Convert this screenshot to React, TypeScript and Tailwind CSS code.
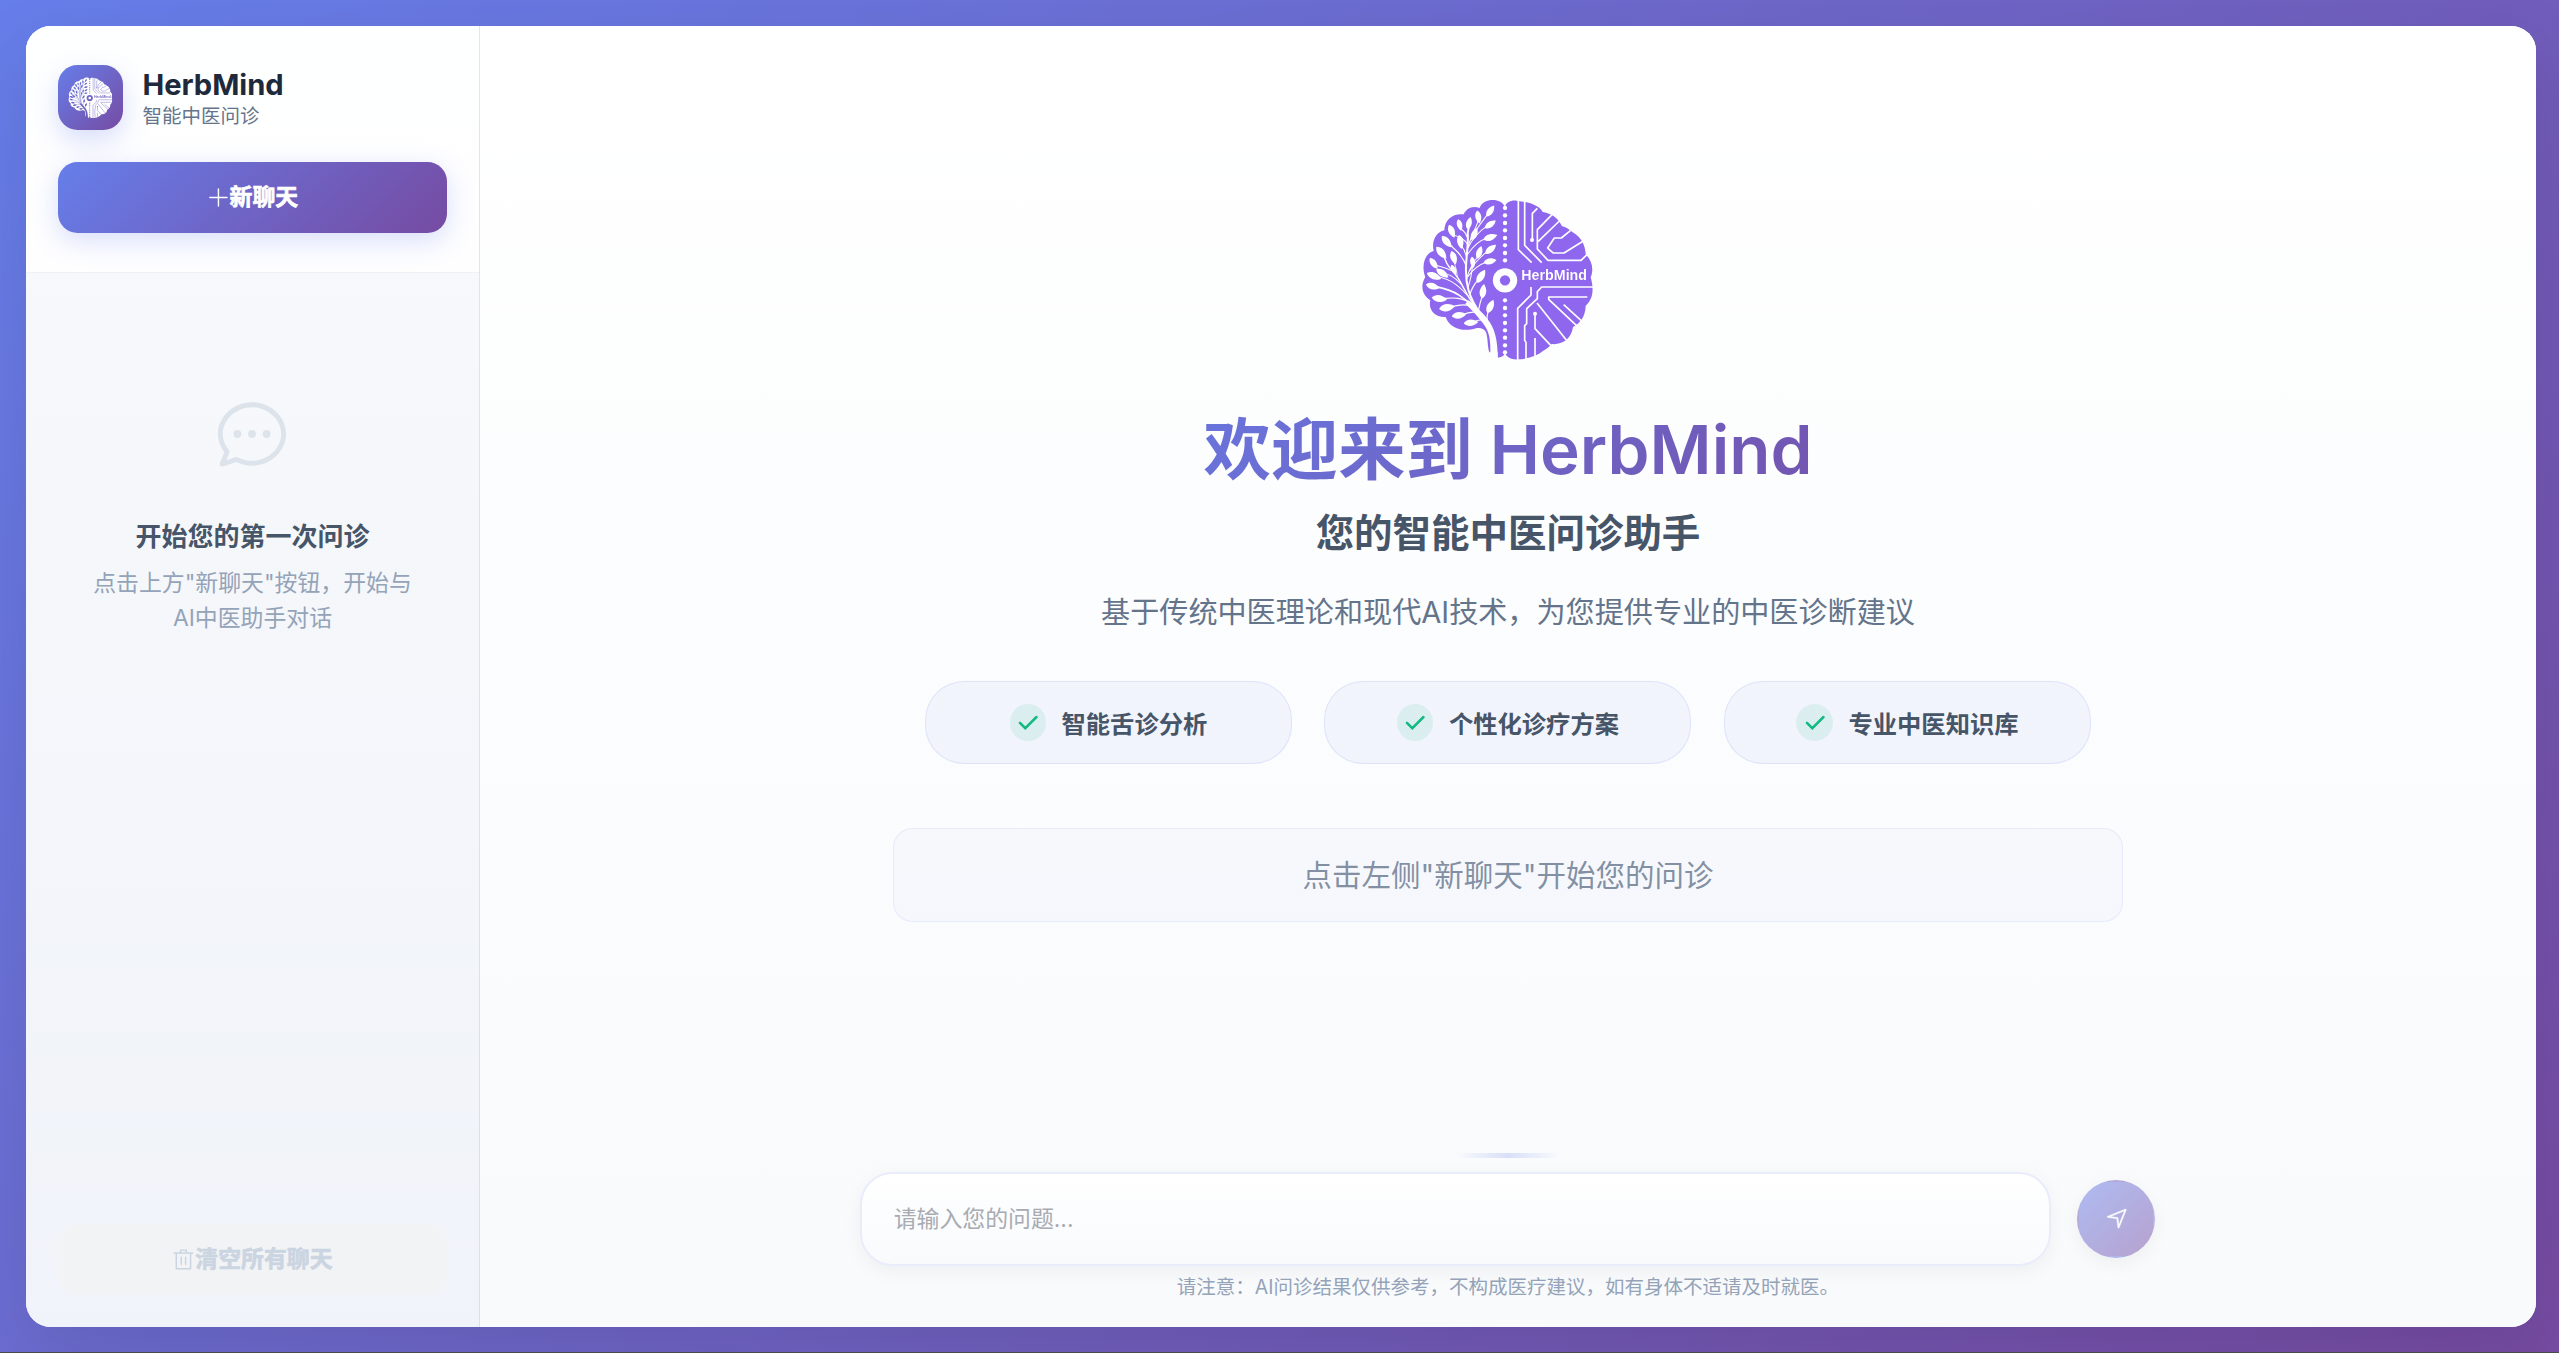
import React from "react";

const FONT = "font-[Inter,'Noto_Sans_CJK_SC',sans-serif]";

function ElIcon({ paths, className }: { paths: string[]; className: string }) {
  return (
    <svg viewBox="0 0 1024 1024" fill="currentColor" className={className}>
      {paths.map((d) => (
        <path key={d} d={d} />
      ))}
    </svg>
  );
}

const PLUS = [
  "M480 480V128a32 32 0 0 1 64 0v352h352a32 32 0 1 1 0 64H544v352a32 32 0 1 1-64 0V544H128a32 32 0 0 1 0-64z",
];
const CHAT = [
  "m174.72 855.68 135.296-45.12 23.68 11.84C388.096 849.536 448.576 864 512 864c211.84 0 384-166.784 384-352S723.84 160 512 160 128 326.784 128 512c0 69.12 24.96 139.264 70.848 199.232l22.08 28.8-46.272 115.584zm-45.248 82.56A32 32 0 0 1 89.6 896l58.368-145.92C94.72 680.32 64 596.864 64 512 64 299.904 256 96 512 96s448 203.904 448 416-192 416-448 416a461.056 461.056 0 0 1-206.912-48.384l-175.616 58.56z",
  "M512 563.2a51.2 51.2 0 1 1 0-102.4 51.2 51.2 0 0 1 0 102.4m192 0a51.2 51.2 0 1 1 0-102.4 51.2 51.2 0 0 1 0 102.4m-384 0a51.2 51.2 0 1 1 0-102.4 51.2 51.2 0 0 1 0 102.4",
];
const TRASH = [
  "M160 256H96a32 32 0 0 1 0-64h256V95.936a32 32 0 0 1 32-32h256a32 32 0 0 1 32 32V192h256a32 32 0 1 1 0 64h-64v672a32 32 0 0 1-32 32H192a32 32 0 0 1-32-32zm448-64v-64H416v64zM224 896h576V256H224zm192-128a32 32 0 0 1-32-32V416a32 32 0 0 1 64 0v320a32 32 0 0 1-32 32m192 0a32 32 0 0 1-32-32V416a32 32 0 0 1 64 0v320a32 32 0 0 1-32 32",
];
const CHECK = [
  "M406.656 706.944 195.84 496.256a32 32 0 1 0-45.248 45.248l256 256 512-512a32 32 0 0 0-45.248-45.248L406.592 706.944z",
];
const POSITION = [
  "m249.6 417.088 319.744 43.072 39.168 310.272L845.12 178.88zm-129.024 47.168a32 32 0 0 1-7.68-61.44l777.792-311.04a32 32 0 0 1 41.6 41.6l-310.72 775.68a32 32 0 0 1-61.44-7.808L512 516.992l-391.424-52.736z",
];

// Leaves of the herb half: centre x, centre y, rotation, length.
const LEAVES: [number, number, number, number][] = [
  [271, 94, -55, 38], [235, 112, 80, 38], [207, 130, -75, 36], [179, 136, 75, 34],
  [155, 155, 68, 40], [271, 134, -35, 38], [223, 163, -65, 38], [181, 187, 80, 40],
  [140, 186, 50, 42], [271, 173, -18, 42], [124, 219, 50, 44], [238, 218, -72, 38],
  [272, 209, -40, 40], [161, 234, 72, 40], [218, 248, 82, 32], [270, 245, -12, 38],
  [101, 251, 55, 38], [161, 270, 62, 30], [127, 281, 35, 42], [102, 289, 22, 44],
  [243, 290, -58, 44], [98, 320, 15, 40], [118, 357, 8, 44], [249, 335, -82, 42],
  [141, 384, -10, 46], [271, 380, -65, 42], [177, 407, -8, 42], [213, 429, -5, 42],
];

const STEMS: [string, number][] = [
  ["M262 430 C235 390 205 365 175 345 C150 330 130 326 112 322", 5],
  ["M262 430 C222 385 198 340 180 305 C168 282 150 270 140 250 C136 240 132 232 130 226", 4.5],
  ["M240 400 C205 350 196 310 198 260 C200 215 206 190 203 160 L207 140", 6],
  ["M200 265 C192 235 178 220 160 205 L148 192", 3.5],
  ["M200 235 C196 215 190 205 184 198", 3],
  ["M203 195 C190 172 168 168 158 166", 3],
  ["M203 175 C196 155 186 150 181 146", 3],
  ["M205 200 C215 160 232 140 235 120 M208 188 C225 150 255 115 266 100", 3],
  ["M204 205 C220 170 245 150 262 138 M202 225 C225 190 245 180 262 175", 3],
  ["M200 300 C205 265 225 245 236 225 M208 275 C225 245 250 225 264 213 M204 290 C225 260 250 250 262 246", 3],
  ["M205 320 C212 300 216 275 218 255", 3],
  ["M210 345 C215 320 230 305 240 293 M236 390 C240 365 246 355 249 340", 3.5],
  ["M262 425 C258 405 266 392 270 385", 3.5],
  ["M200 345 C165 305 140 298 116 291 M182 312 C160 288 145 284 130 281 M152 272 C135 262 120 262 104 255", 3],
  ["M172 292 C170 265 162 250 161 240", 2.5],
  ["M215 372 C180 348 150 356 122 357 M228 388 C195 365 165 380 145 384", 3.5],
  ["M245 405 C225 390 205 400 182 406 M255 425 C245 415 230 424 215 428", 3.5],
];

const DOTS = [85, 107, 130, 152, 175, 197, 220, 242, 362, 385, 407, 430, 452, 474, 497, 518];

const TRACES = [
  "M355 60 V210 L395 249",
  "M374 60 V197 L425 249",
  "M412 86 L397 101 V180",
  "M459 102 L412 150 V208 L444 242 H543 L566 220",
  "M478 124 L414 186",
  "M512 152 L484 175 H463 L443 205 L460 220 H492 L556 180",
  "M585 322 H425 L412 336 V357 L380 387 V432 L374 438 V482 L378 488 V545",
  "M393 322 V346 L353 386 V545",
  "M562 352 H446 V359 L532 440",
  "M491 375 L546 425",
  "M411 370 L503 486",
  "M405 402 V447 L455 500",
  "M405 475 V535",
];

function BrainLogo({ id, className }: { id: string; className: string }) {
  return (
    <svg viewBox="60 55 526 490" className={className}>
      <defs>
        <mask id={id} maskUnits="userSpaceOnUse" x="50" y="45" width="546" height="510">
          <rect x="50" y="45" width="546" height="510" fill="#fff" />
          <g fill="none" stroke="#000" strokeLinecap="round">
            {STEMS.map(([d, w]) => (
              <path key={d} d={d} strokeWidth={w} />
            ))}
          </g>
          <path
            fill="#000"
            d="M271 520 C272 480 268 455 250 432 C235 412 215 390 196 372 L206 362 C240 392 262 412 276 440 C288 464 294 495 293 545 L271 545 Z"
          />
          {LEAVES.map(([x, y, r, l]) => (
            <path
              key={`${x}-${y}`}
              fill="#000"
              transform={`translate(${x} ${y}) rotate(${r}) scale(${l / 40})`}
              d="M-21 0 C-12 -12 6 -13 21 0 C6 13 -12 12 -21 0 Z"
            />
          ))}
          {DOTS.map((y) => (
            <circle key={y} cx="315" cy={y} r="6.5" fill="#000" />
          ))}
          <circle cx="315" cy="302" r="36.5" fill="#000" />
          <circle cx="315" cy="302" r="15.5" fill="#fff" />
          <g fill="none" stroke="#000" strokeWidth="5" strokeLinejoin="round">
            {TRACES.map((d) => (
              <path key={d} d={d} />
            ))}
          </g>
          <circle cx="396" cy="181" r="6" fill="#000" />
          <circle cx="405" cy="402" r="6" fill="#000" />
          <text
            x="364"
            y="302"
            fontSize="42"
            fontWeight="700"
            fontFamily="Liberation Sans, sans-serif"
            textLength="197"
            lengthAdjust="spacingAndGlyphs"
            fill="#000"
          >
            HerbMind
          </text>
        </mask>
      </defs>
      <path
        mask={`url(#${id})`}
        fill="currentColor"
        d="M315 82 C309 66 290 59 272 61 C255 64 243 72 239 85 C218 76 198 86 191 104 C160 100 134 118 133 152 C108 158 94 184 101 214 C76 220 62 256 76 292 C60 318 66 346 91 362 C84 390 104 414 137 412 C148 446 188 458 228 446 C240 444 252 446 258 458 C264 474 262 500 268 518 L293 518 L293 534 C303 534 311 530 315 521 C322 534 334 540 352 539 C385 538 412 528 430 513 C440 508 448 502 455 493 C484 496 514 480 519 442 C540 430 556 412 557 378 C576 362 584 334 572 293 C582 268 576 244 557 224 C556 198 544 172 518 158 C508 150 498 142 486 140 C476 118 458 102 428 97 C420 80 396 68 350 63 C332 61 318 68 315 82 Z"
      />
    </svg>
  );
}

function Feature({ label }: { label: string }) {
  return (
    <div className="flex h-[63.6px] flex-1 items-center justify-center gap-3 rounded-[30px] border border-[#667eea]/15 bg-[#667eea]/[0.06]">
      <span className="flex size-7 items-center justify-center rounded-full bg-[#10b981]/[0.1] text-[#10b981]">
        <ElIcon paths={CHECK} className="size-[18px] overflow-visible stroke-current stroke-[46]" />
      </span>
      <span className="pt-0.5 text-[18.7px] leading-none font-semibold text-[#475569]">{label}</span>
    </div>
  );
}

export default function App() {
  return (
    <div className="border-b border-[#4a4a4a] bg-[#4a4a4a]">
      <div
        className={`${FONT} h-[1040px] overflow-hidden bg-[linear-gradient(135deg,#667eea_0%,#764ba2_100%)] pt-5 pr-[17.7px] pb-[19.3px] pl-5 [zoom:1.3]`}
      >
        <div className="flex h-full overflow-hidden rounded-[19px] bg-white shadow-[0_20px_60px_rgba(0,0,0,0.1)]">
          <aside className="flex w-[349.2px] shrink-0 flex-col border-r border-black/[0.08] bg-linear-to-b from-[#f8fafc] to-[#f0f3f9]">
            <header className="border-b border-black/5 bg-white/90 px-[24.6px] pt-[30px] pb-[30px]">
              <div className="flex h-[50px] items-center gap-[15px]">
                <div className="flex size-[50px] items-center justify-center rounded-[15px] bg-[linear-gradient(135deg,#667eea,#764ba2)] text-white shadow-[0_8px_20px_rgba(102,126,234,0.25)]">
                  <BrainLogo id="logo-small" className="w-[34.5px]" />
                </div>
                <div className="pt-[2.6px]">
                  <div className="text-[22.4px] leading-[26px] font-bold text-[#1e293b]">HerbMind</div>
                  <div className="text-[15px] leading-[22px] text-[#64748b]">智能中医问诊</div>
                </div>
              </div>
              <button className="mt-[24.4px] flex h-[54.6px] w-full items-center justify-center rounded-[15px] bg-[linear-gradient(135deg,#667eea,#764ba2)] text-[17.6px] font-bold text-white shadow-[0_6px_20px_rgba(102,126,234,0.25)]">
                <ElIcon paths={PLUS} className="size-[1em]" />
                <span className="[-webkit-text-stroke:0.5px]">新聊天</span>
              </button>
            </header>
            <div className="flex flex-1 flex-col items-center pt-[94.2px] text-center">
              <ElIcon paths={CHAT} className="size-[60px] text-[#cbd5e1]/60" />
              <h3 className="mt-[34px] text-[20px] leading-[30px] font-semibold text-[#475569]">
                开始您的第一次问诊
              </h3>
              <p className="mt-[7.6px] text-[17.6px] leading-[26.4px] text-[#94a3b8]">
                点击上方"新聊天"按钮，开始与
                <br />
                AI中医助手对话
              </p>
            </div>
            <div className="px-[24.6px] pb-[24.6px]">
              <button className="flex h-[54.6px] w-full items-center justify-center rounded-[15px] bg-[#f2f3f5] text-[17.6px] font-bold text-[#cbd5e1]">
                <ElIcon paths={TRASH} className="size-[1em]" />
                <span className="[-webkit-text-stroke:0.5px]">清空所有聊天</span>
              </button>
            </div>
          </aside>

          <main className="flex flex-1 flex-col items-center bg-linear-to-b from-white to-[#f8fafc]">
            <section className="flex flex-1 flex-col items-center pt-[132.5px]">
              <BrainLogo id="logo-large" className="w-[134.9px] text-[#8f66ee]" />
              <h1 className="mt-[32px] bg-[linear-gradient(135deg,#667eea,#764ba2)] bg-clip-text px-[160px] text-[51.8px] leading-[72px] font-semibold text-transparent">
                欢迎来到 HerbMind
              </h1>
              <h2 className="mt-[6px] text-[29.6px] leading-[44px] font-semibold text-[#475569]">
                您的智能中医问诊助手
              </h2>
              <p className="mt-[20.3px] text-[22.4px] leading-[38px] text-[#64748b]">
                基于传统中医理论和现代AI技术，为您提供专业的中医诊断建议
              </p>
              <div className="mt-[33.5px] flex w-[897px] gap-[25px]">
                <Feature label="智能舌诊分析" />
                <Feature label="个性化诊疗方案" />
                <Feature label="专业中医知识库" />
              </div>
              <div className="mt-[49.2px] flex h-[72.4px] w-[946.6px] items-center justify-center rounded-[15px] border border-[#667eea]/10 bg-[#667eea]/[0.03] text-[22.7px] text-[#64748b]/80">
                点击左侧"新聊天"开始您的问诊
              </div>
            </section>
            <footer className="flex flex-col items-center pb-[19.4px]">
              <div className="h-1 w-20 rounded-full bg-[linear-gradient(90deg,transparent,rgba(102,126,234,0.22),transparent)]" />
              <div className="mt-[11px] flex items-center gap-[20.6px]">
                <div className="flex h-[72px] w-[915.6px] items-center rounded-[25px] border-2 border-[#e9ecfb] bg-linear-to-b from-white to-[#f8fafc] px-6 text-[17.6px] text-[#a8abb2] shadow-[0_4px_15px_rgba(0,0,0,0.05)]">
                  请输入您的问题...
                </div>
                <button className="flex size-[60px] items-center justify-center rounded-full border-2 border-transparent bg-[linear-gradient(135deg,#667eea,#764ba2)] text-white opacity-50 shadow-[0_4px_15px_rgba(0,0,0,0.1)]">
                  <ElIcon paths={POSITION} className="size-[18px] stroke-current stroke-[14]" />
                </button>
              </div>
              <p className="mt-[5.5px] text-[15px] leading-[22px] text-[#94a3b8]">
                请注意：AI问诊结果仅供参考，不构成医疗建议，如有身体不适请及时就医。
              </p>
            </footer>
          </main>
        </div>
      </div>
    </div>
  );
}
